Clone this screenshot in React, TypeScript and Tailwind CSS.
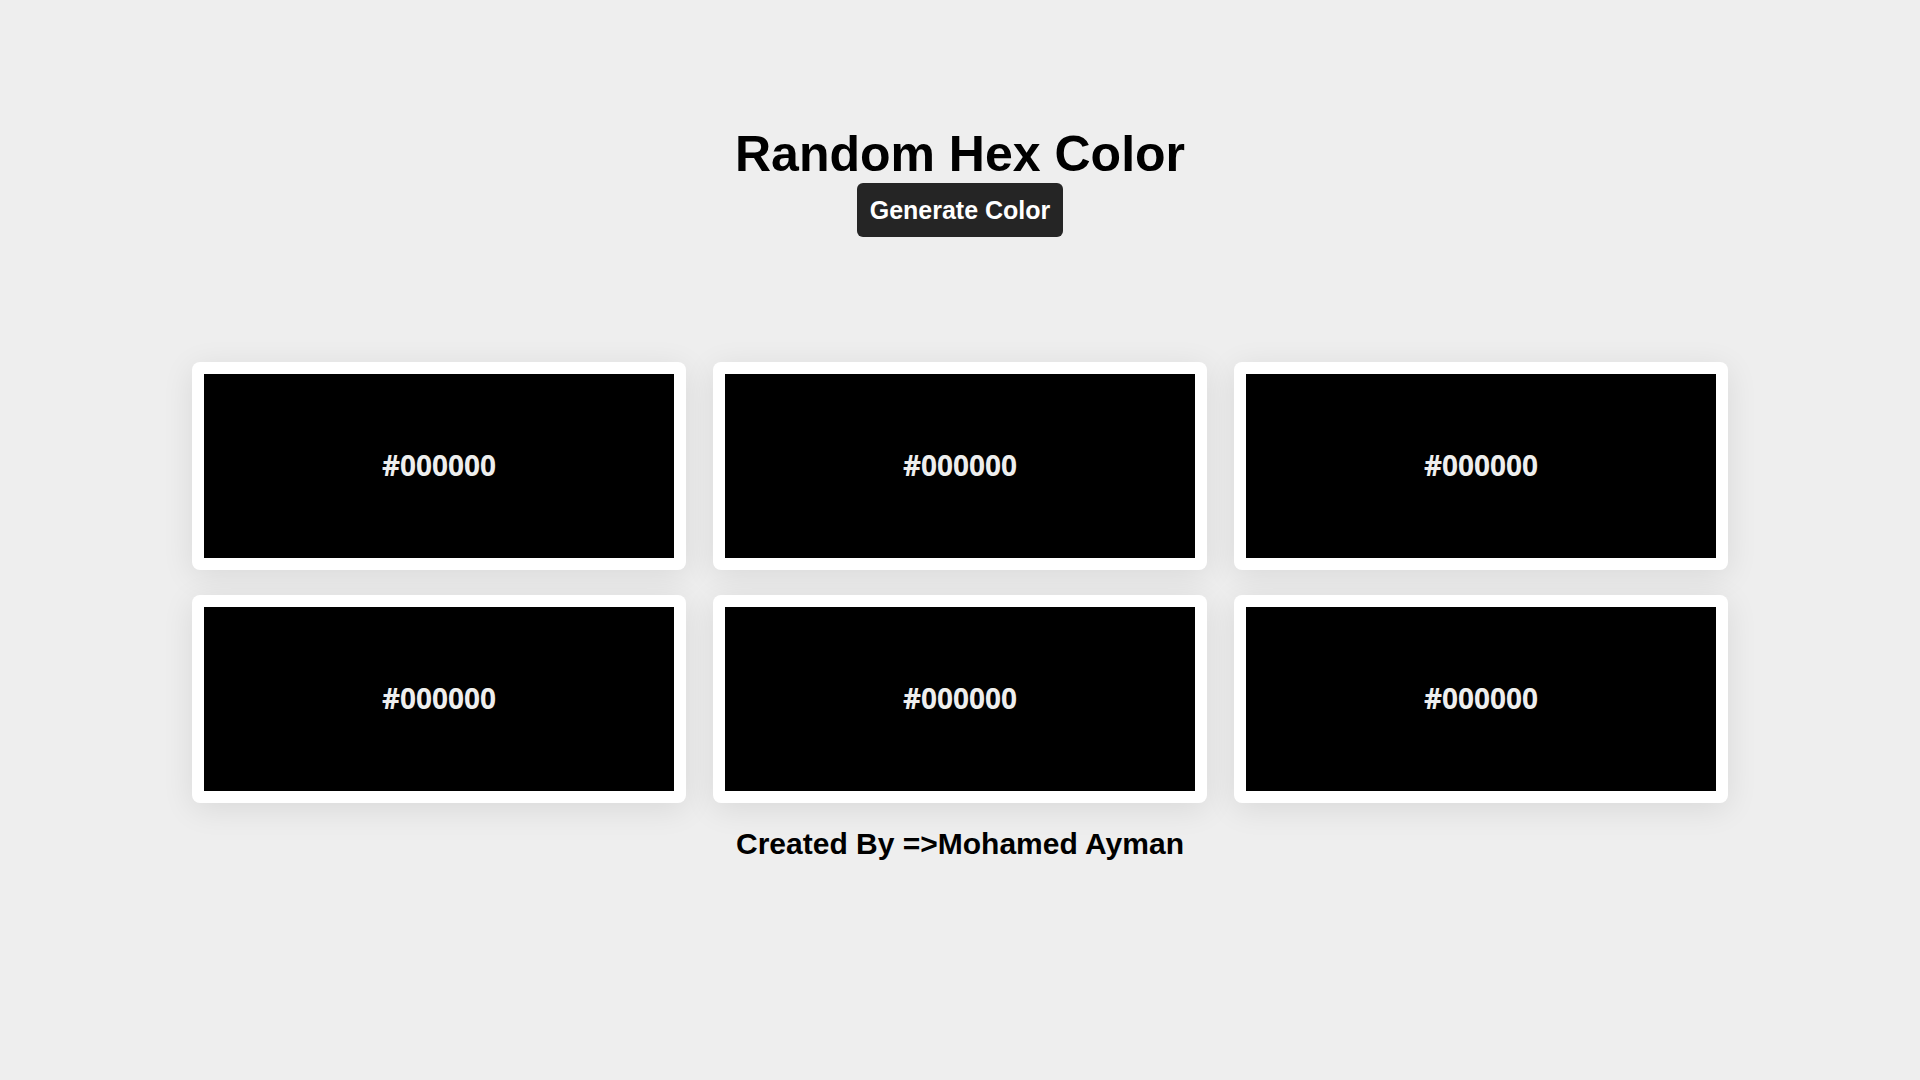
import { useState } from "react";

const SLOTS = 6;

function randomHex() {
  return (
    "#" +
    Math.floor(Math.random() * 0xffffff)
      .toString(16)
      .padStart(6, "0")
  );
}

function ColorCard({ color }: { color: string }) {
  return (
    <div className="rounded-[8px] bg-white p-[12px] shadow-[0_6px_32px_rgba(0,0,0,0.09)]">
      <div
        className="flex h-[184px] items-center justify-center pb-[2px]"
        style={{ backgroundColor: color }}
      >
        <span className="font-['Open_Sans',sans-serif] text-[28px] font-bold text-[#eeeeee]">
          {color}
        </span>
      </div>
    </div>
  );
}

export default function App() {
  const [colors, setColors] = useState<string[]>(
    Array.from({ length: SLOTS }, () => "#000000"),
  );

  const generate = () => {
    setColors(Array.from({ length: SLOTS }, randomHex));
  };

  return (
    <div className="min-h-screen bg-[#eeeeee] font-['Liberation_Sans',Arial,sans-serif] text-black">
      <div className="flex flex-col items-center pt-[126px]">
        <h1 className="text-[50px] leading-[56px] font-bold">Random Hex Color</h1>
        <button
          onClick={generate}
          className="mt-px rounded-[6px] bg-[#252525] px-[13px] py-[12px] text-[25px] leading-[30px] font-bold text-white"
        >
          Generate Color
        </button>

        <div className="mt-[125px] grid w-[80%] grid-cols-3 gap-x-[27px] gap-y-[25px]">
          {colors.map((c, i) => (
            <ColorCard key={i} color={c} />
          ))}
        </div>

        <h2 className="mt-[24px] text-[30px] leading-[34px] font-bold">
          Created By =&gt;Mohamed Ayman
        </h2>
      </div>
    </div>
  );
}
